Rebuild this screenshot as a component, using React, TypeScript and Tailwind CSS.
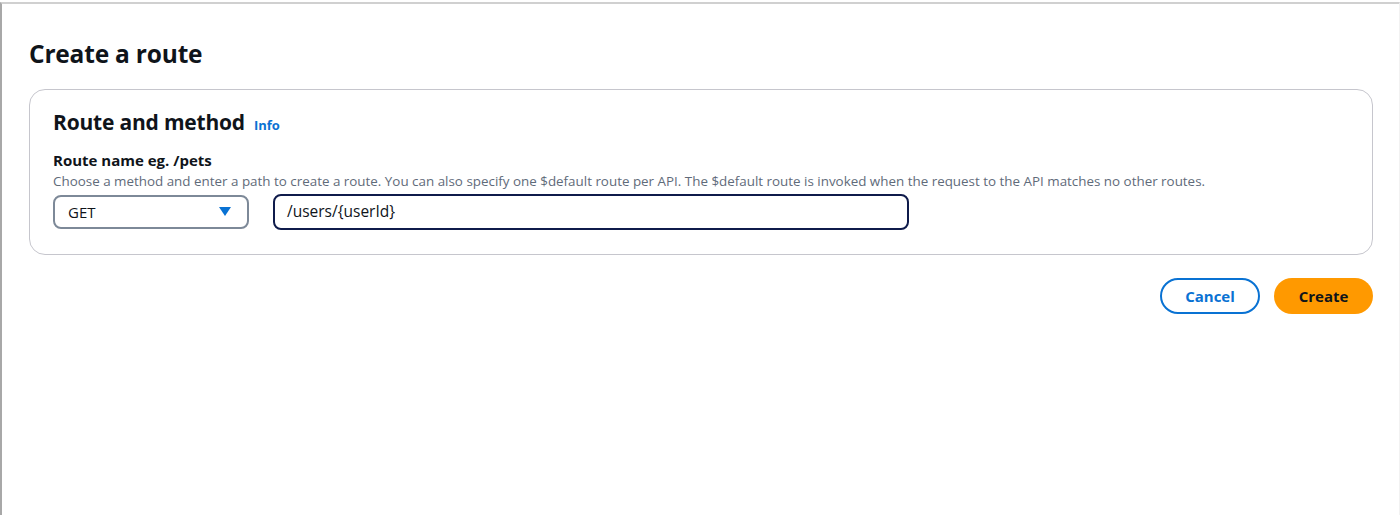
import React from "react";

export default function App() {
  return (
    <div
      className="w-[1400px] h-[515px] bg-white overflow-hidden"
      style={{ fontFamily: '"Open Sans", "Noto Sans", sans-serif' }}
    >
      <div className="h-full mt-[2px] border-t-2 border-l-2 border-r border-t-[#d0d0d0] border-l-[#a8a8a8] border-r-[#f2f2f2] pl-[27px] pr-[26px]">
        <h1 className="pt-[34px] text-[24.5px] leading-[32px] font-bold text-[#0f141a] tracking-[-0.2px]">
          Create a route
        </h1>
        <div className="mt-[19px] border border-[#c6c6cd] rounded-[16px] px-[23px] pt-[17px] pb-[24px]">
          <div className="flex items-baseline gap-[9px]">
            <h2 className="text-[21px] leading-[30px] font-bold text-[#0f141a] tracking-[-0.2px]">
              Route and method
            </h2>
            <span className="text-[13px] font-bold text-[#0972d3]">Info</span>
          </div>
          <div className="mt-[13px] text-[15px] leading-[20px] font-bold text-[#0f141a]">
            Route name eg. /pets
          </div>
          <div className="mt-[2px] text-[13.4px] leading-[19px] text-[#5f6b7a]">
            Choose a method and enter a path to create a route. You can also specify one $default route per API. The $default route is invoked when the request to the API matches no other routes.
          </div>
          <div className="mt-[3px] flex items-center gap-[24px]">
            <div className="w-[196px] h-[34px] border-2 border-[#7d8998] rounded-[8px] flex items-center justify-between pl-[13px] pr-[16px]">
              <span className="text-[15px] text-[#0f141a]">GET</span>
              <svg width="12" height="10" viewBox="0 0 12 10">
                <path d="M0 0 L12 0 L6 9 Z" fill="#0972d3" />
              </svg>
            </div>
            <div className="w-[636px] h-[36px] border-2 border-[#0f1b4b] rounded-[8px] flex items-center pl-[12px]">
              <span className="text-[15.5px] text-[#0f141a]">/users/{"{userId}"}</span>
            </div>
          </div>
        </div>
        <div className="mt-[23px] flex justify-end gap-[14px]">
          <button className="w-[100px] h-[36px] rounded-full border-2 border-[#0972d3] text-[#0972d3] text-[15px] font-bold">
            Cancel
          </button>
          <button className="w-[99px] h-[36px] rounded-full bg-[#ff9900] text-[#0f141a] text-[15px] font-bold">
            Create
          </button>
        </div>
      </div>
    </div>
  );
}
